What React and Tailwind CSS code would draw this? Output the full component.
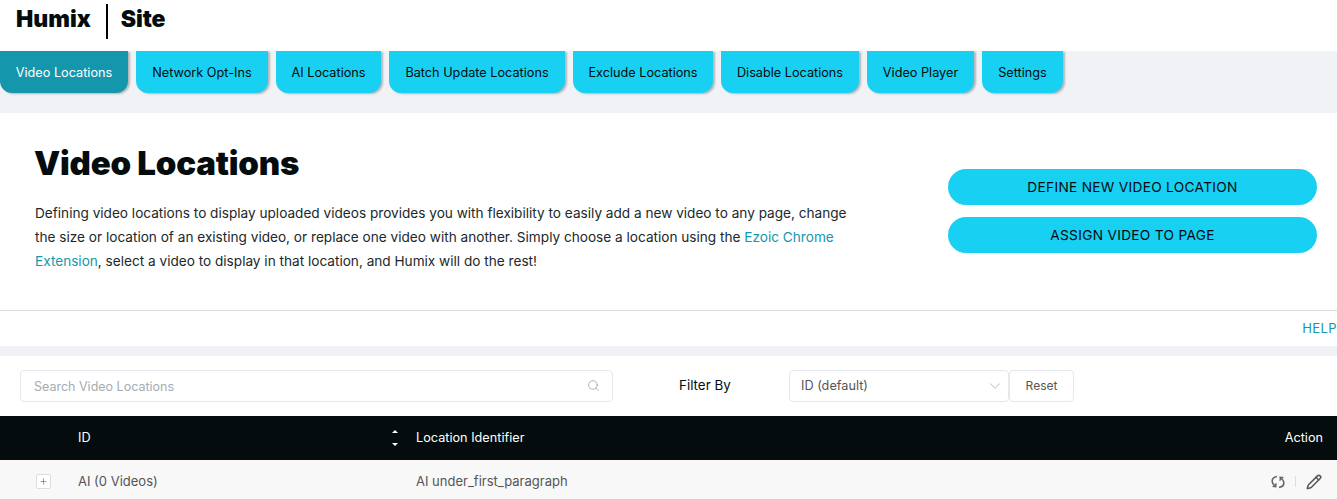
import { Search, ChevronDown, Plus, Pencil } from 'lucide-react'

const tabs = [
  { label: 'Video Locations', width: 'w-[128px]', active: true },
  { label: 'Network Opt-Ins', width: 'w-[132px]' },
  { label: 'AI Locations', width: 'w-[105px]' },
  { label: 'Batch Update Locations', width: 'w-[176px]' },
  { label: 'Exclude Locations', width: 'w-[140px]' },
  { label: 'Disable Locations', width: 'w-[138px]' },
  { label: 'Video Player', width: 'w-[107px]' },
  { label: 'Settings', width: 'w-[81px]' },
]

const body = "font-['Inter',sans-serif]"

export default function App() {
  return (
    <div className={`h-[499px] w-[1337px] overflow-hidden bg-white text-[#040c0e] ${body}`}>
      {/* Logo row */}
      <header className="flex h-[51px] items-start pl-4 pt-1">
        <span className="mt-px text-[23px] font-black leading-[29px]">Humix</span>
        <span className="ml-[15px] h-[35px] w-[2px] bg-black" />
        <span className="ml-[13px] mt-px text-[23px] font-black leading-[29px] tracking-[-0.1px]">Site</span>
      </header>

      {/* Tabs */}
      <nav className="flex h-[62px] items-start gap-2 bg-[#f0f2f6]">
        {tabs.map((tab) => (
          <a
            key={tab.label}
            className={`flex h-[42px] items-center justify-center rounded-b-[12px] pt-[2px] text-[12.7px] shadow-[2px_1px_2px_rgba(0,0,0,0.25)] ${tab.width} ${
              tab.active ? 'bg-[#1497ad] text-white' : 'bg-[#18d1f2] text-[#040c0e]'
            }`}
          >
            {tab.label}
          </a>
        ))}
      </nav>

      {/* Intro */}
      <section className="flex h-[198px] justify-between border-b border-[#dcdcdc] pl-[35px] pr-5">
        <div className="w-[830px]">
          <h1 className="-ml-px mt-[30px] text-[33px] font-black leading-[40px] tracking-[-0.2px]">Video Locations</h1>
          <p className="mt-[18px] w-[822px] text-[13.62px] leading-6 text-[#20282a]">
            Defining video locations to display uploaded videos provides you with flexibility to easily add a new video to any page, change
            the size or location of an existing video, or replace one video with another. Simply choose a location using the{' '}
            <a className="text-[#1497ad]">Ezoic Chrome Extension</a>, select a video to display in that location, and Humix will do the rest!
          </p>
        </div>
        <div className="mt-14 flex w-[369px] flex-col gap-3">
          <button className="h-9 rounded-[18px] bg-[#18d1f2] text-[13.7px] tracking-[0.3px]">DEFINE NEW VIDEO LOCATION</button>
          <button className="h-9 rounded-[18px] bg-[#18d1f2] text-[13.7px] tracking-[0.3px]">ASSIGN VIDEO TO PAGE</button>
        </div>
      </section>

      {/* Help */}
      <div className="flex h-[35px] items-center justify-end text-[13px] tracking-[0.4px] text-[#1497ad]">HELP</div>
      <div className="h-[10px] bg-[#f0f2f6]" />

      {/* Filters */}
      <div className="flex h-[60px] items-center pl-5">
        <div className="flex h-8 w-[593px] items-center justify-between rounded border border-[#e4e7ec] pl-[13px] pr-[12px] pt-[2px] text-[12.5px] text-[#a3adb3]">
          Search Video Locations
          <Search size={13} strokeWidth={1.25} className="-mt-[3px] text-[#8b9296]" />
        </div>
        <span className="-mt-px ml-[66px] w-[110px] text-[13.4px]">Filter By</span>
        <div className="flex h-8 w-[220px] items-center justify-between rounded border border-[#e4e7ec] pl-[11px] pr-[4px] text-[12.7px] text-[#555]">
          ID (default)
          <ChevronDown size={18} strokeWidth={0.9} className="text-[#999]" />
        </div>
        <button className="h-8 w-[65px] rounded border border-[#e4e7ec] text-[12px] text-[#555]">Reset</button>
      </div>

      {/* Table */}
      <div className="flex h-11 items-center bg-[#040c0e] pr-[14px] text-[12.7px] text-white">
        <span className="ml-[78px] w-[313px]">ID</span>
        <span className="flex w-[25px] flex-col items-start">
          <svg width="8" height="18" viewBox="0 0 8 18" fill="white">
            <path d="M4 1 7 4H1z" />
            <path d="M4 17 1 14h6z" />
          </svg>
        </span>
        <span className="flex-1">Location Identifier</span>
        <span>Action</span>
      </div>
      <div className="flex h-[39px] items-center bg-[#f8f8f8] pr-[15px] pt-1 text-[13px] text-[#555]">
        <span className="ml-[36px] flex h-[15px] w-[15px] items-center justify-center rounded-[2px] border border-[#ddd] bg-white">
          <Plus size={9} strokeWidth={1.5} />
        </span>
        <span className="ml-[27px] w-[338px]">AI (0 Videos)</span>
        <span className="flex-1">AI under_first_paragraph</span>
        <svg width="14" height="14" viewBox="0 0 14 14" fill="none" stroke="#666" strokeWidth="1.6">
          <path d="M6 1.5C3 2 1 4 1.2 6.5c.1 1.4.8 2.5 1.8 3.5" />
          <path d="M8 12.5c3-.5 5-2.5 4.8-5-.1-1.4-.8-2.5-1.8-3.5" />
          <path d="M5.5 7.5v5L1 12z" fill="#666" stroke="none" />
          <path d="M8.5 6.5v-5L13 2z" fill="#666" stroke="none" />
        </svg>
        <span className="mx-[10px] h-[11px] w-px bg-[#ddd]" />
        <Pencil size={16} strokeWidth={2.25} className="text-[#555]" />
      </div>
    </div>
  )
}
